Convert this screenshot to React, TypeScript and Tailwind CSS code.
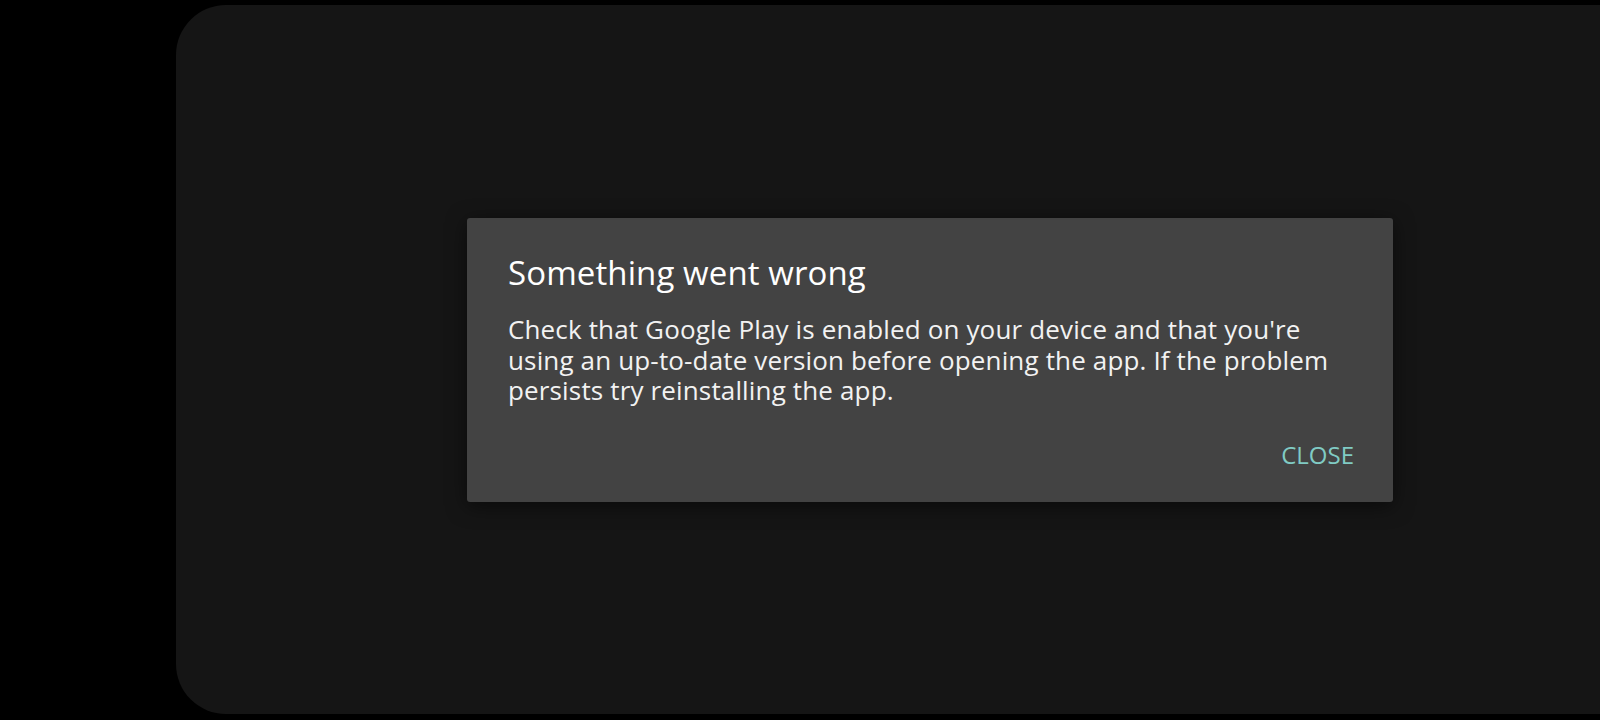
export default function App() {
  return (
    <div className="w-[1600px] h-[720px] bg-black pt-[5px] pb-[6px] pl-[176px] overflow-hidden">
      <div className="h-full bg-[#151515] rounded-l-[50px] flex items-start pl-[291px] pt-[213px]">
        <div
          className="w-[926px] h-[284px] bg-[#434343] rounded-[3px] shadow-[0_4px_20px_rgba(0,0,0,0.5)] flex flex-col px-[41px] pt-[34px] text-white"
          style={{ fontFamily: '"Open Sans", sans-serif' }}
        >
          <h1 className="text-[33px] leading-[42px] font-medium tracking-[0.1px]">Something went wrong</h1>
          <p className="mt-[20px] text-[26px] leading-[30.5px] tracking-[0.15px] text-[#f2f2f2]">
            Check that Google Play is enabled on your device and that you're
            <br />
            using an up-to-date version before opening the app. If the problem
            <br />
            persists try reinstalling the app.
          </p>
          <div className="mt-auto mb-[32px] flex justify-end">
            <button className="text-[24px] leading-[30px] text-[#80cbc4] -mr-[2px]">CLOSE</button>
          </div>
        </div>
      </div>
    </div>
  );
}
